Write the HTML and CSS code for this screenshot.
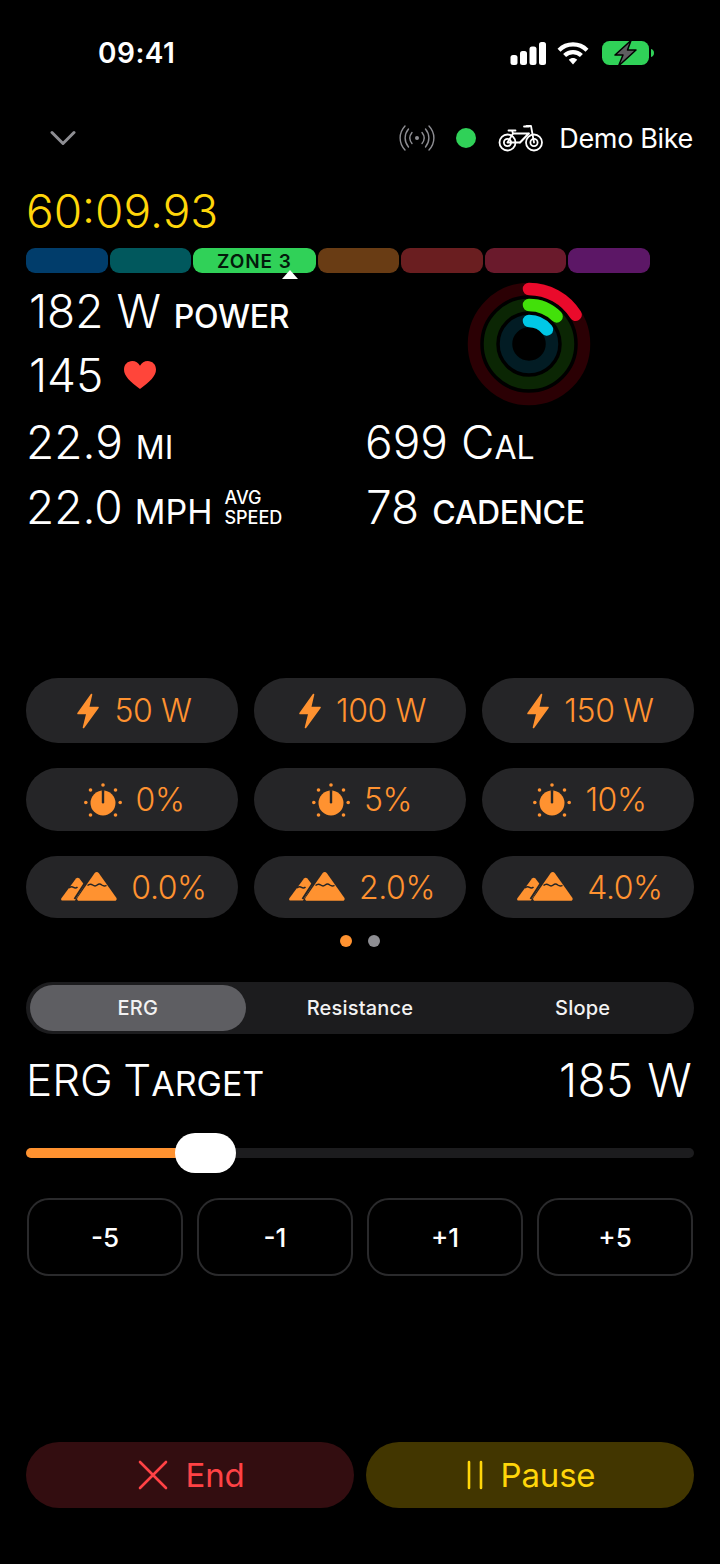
FILE: index.html
```html
<!DOCTYPE html>
<html lang="en">
<head>
<meta charset="utf-8">
<title>Workout</title>
<link rel="stylesheet" href="styles.css">
</head>
<body>
<svg class="defs" width="0" height="0" aria-hidden="true">
  <symbol id="bolt" viewBox="0 0 24 36"><path d="M15.5 1.5 2 20.5h9L7.5 34.5 22 14.5h-9.5z" fill="currentColor" stroke="currentColor" stroke-width="1.6" stroke-linejoin="round"/></symbol>
  <symbol id="dial" viewBox="0 0 38 34">
    <circle cx="19" cy="20" r="12.5" fill="currentColor"/>
    <rect x="17.8" y="7" width="2.4" height="13.5" rx="1.2" fill="#252527"/>
    <g fill="currentColor"><circle cx="19" cy="2" r="1.8"/><circle cx="6.5" cy="7" r="1.8"/><circle cx="31.5" cy="7" r="1.8"/><circle cx="1.8" cy="19.5" r="1.8"/><circle cx="36.2" cy="19.5" r="1.8"/><circle cx="6.5" cy="32" r="1.8"/><circle cx="31.5" cy="32" r="1.8"/></g>
  </symbol>
  <symbol id="mountains" viewBox="0 0 56 30">
    <path d="M15 6.500c1-1 2.400-1 3.400 0l5 6.500L14 28.500H1.500C.3 28.500-.3 27.300.4 26.300z" fill="currentColor"/>
    <path d="M33.700 1c1-1.200 3-1.200 4 0l17.600 24.800c.9 1.300 0 2.900-1.500 2.900H18c-1.500 0-2.400-1.600-1.500-2.900z" fill="currentColor"/>
    <path d="M26.500 13.500c2-1.800 3.500-1.800 5.200-.5 1.700 1.300 3 1.300 4.500 0 1.600-1.300 3-1.300 4.600 0 1.700 1.300 3 1.300 4.700.3" fill="none" stroke="#252527" stroke-width="1.500"/>
    <path d="M8 16c1.800-1.600 3-1.600 4.500-.6 1.500 1 2.800.8 4-.4" fill="none" stroke="#252527" stroke-width="1.500"/>
    <path d="M23.500 11.500 13.500 27" fill="none" stroke="#252527" stroke-width="2"/>
  </symbol>
</svg>

<main class="page">
  <header class="status">
    <span class="clock">09:41</span>
    <div class="status-icons">
      <svg class="ico-signal" width="36" height="23" viewBox="0 0 36 23"><g fill="#fff"><rect x="0.500" y="13" width="7" height="10" rx="2.500"/><rect x="10" y="9" width="7" height="14" rx="2.500"/><rect x="19.500" y="4.500" width="7" height="18.500" rx="2.500"/><rect x="29" y="0" width="7" height="23" rx="2.500"/></g></svg>
      <svg class="ico-wifi" width="32" height="24" viewBox="0 0 32 24"><g fill="none" stroke="#fff" stroke-width="4.200"><path d="M2 9.200C9.800 1.500 22.200 1.500 30 9.200"/><path d="M7.600 14.500c4.700-4.600 12.100-4.600 16.800 0"/></g><path d="M11.800 18.700c2.400-2.200 6-2.200 8.400 0L16 23.500z" fill="#fff"/></svg>
      <svg class="ico-battery" width="52" height="26" viewBox="0 0 52 26"><rect x="0" y="1" width="47" height="24" rx="7.500" fill="#30d158"/><path d="M49 9c2 .4 3 2 3 4s-1 3.600-3 4z" fill="#30d158"/><path d="M29 0.500 13 15h8L16.500 26 34 10h-8.500z" fill="#5e5e60" stroke="#000" stroke-width="1.500" stroke-linejoin="round"/></svg>
    </div>
  </header>

  <nav class="topbar">
    <svg class="chevron" width="26" height="16" viewBox="0 0 26 16"><path d="M2 2.500 13 13.500 24 2.500" fill="none" stroke="#8e8e93" stroke-width="3" stroke-linecap="round" stroke-linejoin="round"/></svg>
    <div class="device">
      <svg class="antenna" width="36" height="26" viewBox="0 0 36 26"><g fill="none" stroke="#8e8e93" stroke-width="1.400" stroke-linecap="round"><path d="M6 1C-.5 8-.5 18 6 25"/><path d="M30 1c6.500 7 6.500 17 0 24"/><path d="M9.500 4C5 9.500 5 16.500 9.500 22"/><path d="M26.500 4c4.500 5.500 4.500 12.500 0 18"/><path d="M13 7.500c-2.800 3.500-2.800 7.500 0 11"/><path d="M23 7.500c2.800 3.500 2.800 7.500 0 11"/></g><circle cx="18" cy="13" r="2" fill="#8e8e93"/></svg>
      <span class="conn-dot"></span>
      <svg class="bike" width="46" height="28" viewBox="0 0 46 28"><g fill="none" stroke="#fff" stroke-width="1.800" stroke-linecap="round" stroke-linejoin="round"><circle cx="9.500" cy="18.500" r="8"/><circle cx="36" cy="18.500" r="8"/><circle cx="9.500" cy="18.500" r="3.600"/><circle cx="36" cy="18.500" r="3.600"/><path d="M9.500 18.500 15 9.500h15.500L22 18.500H9.500"/><path d="M15 9.500 14 6.500M10.500 6.500h7"/><path d="M28.500 2h4.500l3 16.500"/><path d="M31 9.500 22 18.500"/><path d="M26 2.500h5"/></g></svg>
      <span class="device-name">Demo Bike</span>
    </div>
  </nav>

  <div class="timer">60:09.93</div>

  <div class="zones">
    <span class="zone z1"></span>
    <span class="zone z2"></span>
    <span class="zone z3">ZONE 3</span>
    <span class="zone z4"></span>
    <span class="zone z5"></span>
    <span class="zone z6"></span>
    <span class="zone z7"></span>
    <span class="zone-marker"></span>
  </div>

  <section class="metrics">
    <div class="metric m-power"><span class="val">182 W</span><span class="unit medium">POWER</span></div>
    <div class="rings">
      <svg width="124" height="124" viewBox="0 0 124 124">
        <g fill="none" stroke-width="12.500" stroke-linecap="round">
          <circle cx="62" cy="62" r="55" stroke="#2b0004"/>
          <circle cx="62" cy="62" r="39" stroke="#0b2604"/>
          <circle cx="62" cy="62" r="23" stroke="#021c24"/>
          <path d="M62 7A55 55 0 0 1 108.600 32.800" stroke="#ea0a2b"/>
          <path d="M62 23A39 39 0 0 1 89.600 34.400" stroke="#42e00a"/>
          <path d="M62 39A23 23 0 0 1 79.900 47.500" stroke="#00c8e6"/>
        </g>
      </svg>
    </div>
    <div class="metric m-hr"><span class="val">145</span>
      <svg class="heart" width="32" height="28" viewBox="0 0 32 28"><path d="M16 28C6 20.500 0 15 0 8.500 0 3.500 3.700 0 8.300 0c3.300 0 6 1.700 7.700 4.700C17.700 1.700 20.400 0 23.700 0 28.300 0 32 3.500 32 8.500 32 15 26 20.500 16 28z" fill="#ff453a"/></svg>
    </div>
    <div class="metric m-dist"><span class="val">22.9</span><span class="unit">MI</span></div>
    <div class="metric m-cal"><span class="val">699</span><span class="unit"><span class="cap">C</span>AL</span></div>
    <div class="metric m-speed"><span class="val">22.0</span><span class="unit unit-mph">MPH</span><span class="avg">AVG<br>SPEED</span></div>
    <div class="metric m-cad"><span class="val">78</span><span class="unit medium">CADENCE</span></div>
  </section>

  <section class="presets">
    <button class="chip"><svg class="i-bolt"><use href="#bolt"/></svg>50 W</button>
    <button class="chip"><svg class="i-bolt"><use href="#bolt"/></svg>100 W</button>
    <button class="chip"><svg class="i-bolt"><use href="#bolt"/></svg>150 W</button>
    <button class="chip"><svg class="i-dial"><use href="#dial"/></svg>0%</button>
    <button class="chip"><svg class="i-dial"><use href="#dial"/></svg>5%</button>
    <button class="chip"><svg class="i-dial"><use href="#dial"/></svg>10%</button>
    <button class="chip"><svg class="i-mount"><use href="#mountains"/></svg>0.0%</button>
    <button class="chip"><svg class="i-mount"><use href="#mountains"/></svg>2.0%</button>
    <button class="chip"><svg class="i-mount"><use href="#mountains"/></svg>4.0%</button>
  </section>

  <div class="pager"><span class="pg on"></span><span class="pg"></span></div>

  <div class="segmented">
    <span class="seg active">ERG</span>
    <span class="seg">Resistance</span>
    <span class="seg">Slope</span>
  </div>

  <div class="target">
    <span class="target-label">ERG <span class="target-t">T</span><span class="target-rest">ARGET</span></span>
    <span class="target-val">185 W</span>
  </div>

  <div class="slider">
    <div class="track"><div class="fill" style="width:154px"></div></div>
    <span class="thumb"></span>
  </div>

  <div class="steppers">
    <button class="step">-5</button>
    <button class="step">-1</button>
    <button class="step">+1</button>
    <button class="step">+5</button>
  </div>

  <div class="actions">
    <button class="action end"><svg width="30" height="30" viewBox="0 0 30 30"><path d="M2 2 28 28M28 2 2 28" fill="none" stroke="currentColor" stroke-width="2.600" stroke-linecap="round"/></svg>End</button>
    <button class="action pause"><svg width="16" height="30" viewBox="0 0 16 30"><path d="M2 2V28M14 2V28" fill="none" stroke="currentColor" stroke-width="2.600" stroke-linecap="round"/></svg>Pause</button>
  </div>
</main>
</body>
</html>
```

FILE: styles.css
```css
* { box-sizing: border-box; }
html, body { margin: 0; padding: 0; background: #000; }
body { font-family: Inter, "Liberation Sans", sans-serif; color: #fff; }
button { font-family: inherit; border: 0; padding: 0; background: none; }
.defs { position: absolute; }

.page { width: 720px; height: 1564px; display: flex; flex-direction: column; padding: 0 26px 56px; overflow: hidden; }

.status { height: 106px; display: flex; align-items: center; justify-content: space-between; padding: 0 40px 0 72px; flex: none; }
.clock { font-size: 28px; font-weight: 600; letter-spacing: 0.5px; }
.status-icons { display: flex; align-items: center; gap: 11px; }
.ico-battery { margin-left: 2px; }

.topbar { height: 64px; flex: none; display: flex; align-items: center; justify-content: space-between; padding: 0 1px 0 24px; }
.device { display: flex; align-items: center; }
.conn-dot { width: 20px; height: 20px; border-radius: 50%; background: #30d158; margin-left: 21px; }
.bike { margin-left: 22px; }
.device-name { font-size: 27px; margin-left: 15px; letter-spacing: -0.35px; }

.timer { height: 78px; flex: none; font-size: 46px; font-weight: 300; line-height: 82px; color: #ffd60a; }

.zones { position: relative; flex: none; height: 25px; display: flex; gap: 2px; width: 624px; }
.zone { flex: 1 1 0; border-radius: 9px; display: flex; align-items: center; justify-content: center; }
.z1 { background: #013d6b; }
.z2 { background: #01585d; }
.z3 { flex: 1.5 1 0; background: #30d158; color: #031a0b; font-size: 19px; font-weight: 600; letter-spacing: 0.9px; padding-top: 1px; }
.z4 { background: #693c14; }
.z5 { background: #6a1e20; }
.z6 { background: #6a1a2c; }
.z7 { background: #5c1766; }
.zone-marker { position: absolute; left: 256px; top: 22px; width: 0; height: 0; border-left: 8px solid transparent; border-right: 8px solid transparent; border-bottom: 9px solid #fff; }

.metrics { flex: none; margin-top: 6px; display: grid; grid-template-columns: 340px 1fr; grid-template-rows: 64px 64px 68px 66px; }
.metric { display: flex; align-items: baseline; white-space: pre; line-height: 64px; }
.val { font-size: 46px; font-weight: 300; }
.unit { font-size: 32px; font-weight: 400; margin-left: 13px; }
.unit-mph { font-size: 34px; margin-left: 12px; }
.cap { font-size: 46px; font-weight: 300; }
.medium { font-weight: 500; letter-spacing: -0.35px; }
.m-power { grid-column: 1; grid-row: 1; padding-left: 3px; }
.rings { grid-column: 2; grid-row: 1 / span 2; display: flex; align-items: center; justify-content: center; padding: 2px 2px 0 0; }
.m-hr { grid-column: 1; grid-row: 2; padding-left: 3px; align-items: center; }
.heart { margin-left: 21px; }
.m-dist { grid-column: 1; grid-row: 3; padding-top: 3px; }
.m-cal { grid-column: 2; grid-row: 3; margin-left: -1px; padding-top: 3px; }
.m-speed { grid-column: 1; grid-row: 4; }
.m-cad { grid-column: 2; grid-row: 4; }
.avg { align-self: center; font-size: 18px; line-height: 20px; font-weight: 500; margin-left: 12px; }

.presets { flex: none; margin-top: 137px; display: grid; grid-template-columns: repeat(3, 1fr); grid-template-rows: 65px 63px 62px; gap: 25px 16px; }
.chip { background: #252527; border-radius: 32px; color: #ff9230; font-size: 32px; font-weight: 300; letter-spacing: -0.4px; display: flex; align-items: center; justify-content: center; gap: 14px; padding-left: 4px; }
.i-bolt { width: 24px; height: 36px; }
.i-dial { width: 38px; height: 34px; }
.i-mount { width: 56px; height: 30px; }

.pager { flex: none; margin-top: 17px; height: 12px; display: flex; justify-content: center; gap: 16px; }
.pg { width: 12px; height: 12px; border-radius: 50%; background: #8e8e93; }
.pg.on { background: #ff9230; }

.segmented { flex: none; margin-top: 35px; height: 52px; padding: 3px 0; border-radius: 26px; background: #1c1c1e; display: grid; grid-template-columns: repeat(3, 1fr); align-items: stretch; }
.seg { font-size: 20px; font-weight: 500; letter-spacing: 0.2px; display: flex; align-items: center; justify-content: center; color: #f2f2f2; border-radius: 23px; }
.seg.active { background: #5e5e62; margin: 0 3px 0 4px; }

.target { flex: none; height: 92px; display: flex; align-items: center; justify-content: space-between; padding: 0 2px 0 0; font-weight: 300; }
.target-label { font-size: 44px; white-space: pre; word-spacing: -2px; }
.target-rest { font-size: 34px; font-weight: 400; }
.target-val { font-size: 46px; letter-spacing: 0.4px; }
.slider { flex: none; position: relative; margin-top: 7px; height: 40px; display: flex; align-items: center; }
.track { width: 100%; height: 10px; border-radius: 5px; background: #1c1c1e; }
.fill { height: 100%; border-radius: 5px; background: #ff9230; }
.thumb { position: absolute; left: 149px; top: 0; width: 61px; height: 40px; border-radius: 20px; background: #fff; }

.steppers { flex: none; margin-top: 25px; display: grid; grid-template-columns: repeat(4, 1fr); gap: 14px; padding: 0 1px; }
.step { height: 78px; border: 2px solid #2a2a2c; border-radius: 22px; color: #fff; font-size: 26px; font-weight: 500; }

.actions { flex: none; margin-top: auto; display: grid; grid-template-columns: 1fr 1fr; gap: 12px; }
.action { height: 66px; border-radius: 33px; font-size: 33px; font-weight: 400; letter-spacing: -0.2px; display: flex; align-items: center; justify-content: center; gap: 18px; padding-left: 2px; }
.end { background: #330d10; color: #ff4245; }
.pause { background: #423600; color: #ffd60a; }
```
